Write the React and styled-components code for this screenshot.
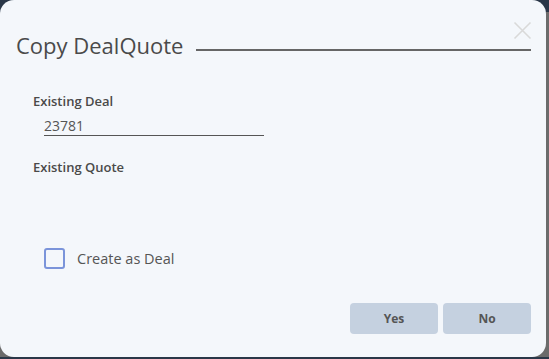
import React from "react";
import styled, { createGlobalStyle } from "styled-components";

const Global = createGlobalStyle`
  html, body {
    margin: 0;
    padding: 0;
    font-family: "Open Sans", "Noto Sans", sans-serif;
  }
  body {
    background: linear-gradient(180deg, #2a3748 0, #2a3748 12px, #6b6b6b 12px);
  }
`;

const Dialog = styled.div`
  position: relative;
  width: 546px;
  height: 357px;
  box-sizing: border-box;
  background: #f4f7fb;
  border-radius: 14px;
  display: flex;
  flex-direction: column;
  overflow: hidden;
`;

const Header = styled.div`
  display: flex;
  align-items: flex-end;
  padding: 30px 15px 0 16px;
`;

const Title = styled.h2`
  margin: 0;
  font-size: 22px;
  line-height: 30px;
  font-weight: 400;
  color: #4a4a4a;
  white-space: nowrap;
`;

const TitleRule = styled.div`
  flex: 1;
  height: 2px;
  background: #666;
  margin: 0 0 9px 13px;
`;

const Close = styled.button`
  position: absolute;
  top: 21px;
  right: 14px;
  width: 19px;
  height: 19px;
  padding: 0;
  border: 0;
  background: none;
  cursor: pointer;
`;

const Body = styled.div`
  flex: 1;
  padding: 32px 0 0 33px;
  display: flex;
  flex-direction: column;
  align-items: flex-start;
`;

const Label = styled.label`
  font-size: 13px;
  font-weight: 600;
  color: #4a4a4a;
  line-height: 18px;
  margin-top: ${(p) => p.$top || 0}px;
`;

const Input = styled.input`
  width: 220px;
  margin: 6px 0 0 11px;
  padding: 0 0 1px 0;
  border: 0;
  border-bottom: 1px solid #555;
  background: transparent;
  font-family: inherit;
  font-size: 14px;
  line-height: 18px;
  height: 20px;
  box-sizing: border-box;
  color: #555;
  outline: none;
`;

const CheckRow = styled.label`
  display: flex;
  align-items: center;
  gap: 12px;
  margin: 72px 0 0 11px;
  font-size: 14.5px;
  color: #555;
  cursor: pointer;
`;

const Box = styled.span`
  width: 21px;
  height: 21px;
  box-sizing: border-box;
  border: 2px solid #7b94da;
  border-radius: 3px;
  background: #f4f7fb;
`;

const Footer = styled.div`
  display: flex;
  justify-content: flex-end;
  gap: 5px;
  padding: 0 15px 23px 0;
`;

const Button = styled.button`
  width: 88px;
  height: 31px;
  border: 0;
  border-radius: 4px;
  background: #c5d1e0;
  font-family: inherit;
  font-size: 12px;
  font-weight: 700;
  color: #555;
  cursor: pointer;
`;

export default function App() {
  return (
    <>
      <Global />
      <Dialog>
        <Header>
          <Title>Copy DealQuote</Title>
          <TitleRule />
        </Header>
        <Close aria-label="Close">
          <svg width="19" height="19" viewBox="0 0 19 19">
            <path d="M1.5 1.5 L17.5 17.5 M17.5 1.5 L1.5 17.5" stroke="#d9d9d9" strokeWidth="1.6" fill="none" />
          </svg>
        </Close>
        <Body>
          <Label>Existing Deal</Label>
          <Input defaultValue="23781" />
          <Label $top={22}>Existing Quote</Label>
          <CheckRow>
            <Box />
            Create as Deal
          </CheckRow>
        </Body>
        <Footer>
          <Button>Yes</Button>
          <Button>No</Button>
        </Footer>
      </Dialog>
    </>
  );
}
